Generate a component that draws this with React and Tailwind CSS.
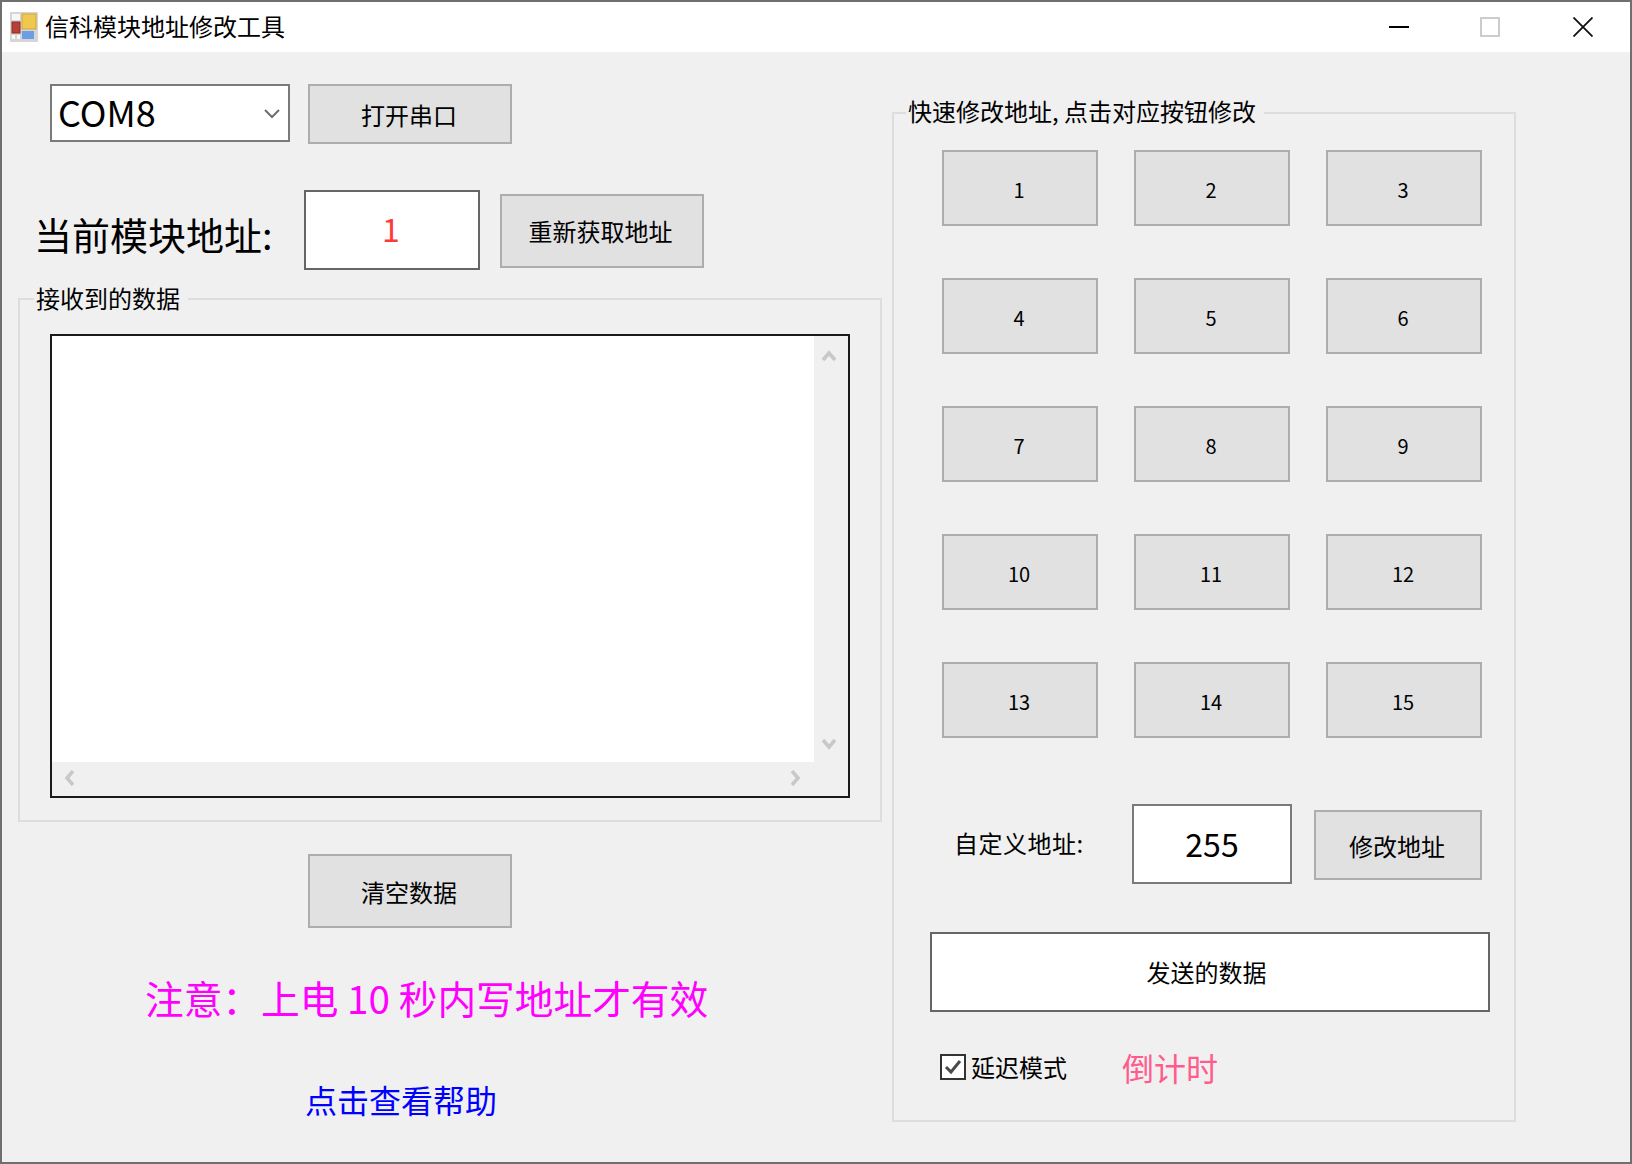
import React from 'react';

const font = "font-['Noto_Sans_CJK_SC','Liberation_Sans',sans-serif]";

const Btn = ({ className = '', children }) => (
    <button className={`flex items-center justify-center bg-[#e1e1e1] border-2 border-[#adadad] text-black ${className}`}>
        {children}
    </button>
);

const Chevron = ({ points, className = '' }) => (
    <svg width="16" height="16" viewBox="0 0 16 16" className={className}>
        <polyline points={points} fill="none" stroke="#c8c8c8" strokeWidth="3.5" />
    </svg>
);

const AppIcon = () => (
    <svg width="28" height="30" viewBox="0 0 28 30" className="ml-[8px] mr-[7px] shrink-0 -mt-[1px]">
        <rect width="28" height="30" fill="#d6d6d6" />
        <rect x="2" y="2" width="8" height="6" fill="#f8f8f8" />
        <rect x="12" y="2" width="14" height="15" fill="#f0c850" stroke="#cfa632" />
        <rect x="2" y="10" width="8" height="11" fill="#b8403a" stroke="#922620" />
        <rect x="12" y="19" width="12" height="8" fill="#6c9ee8" />
        <rect x="2" y="23" width="3" height="4" fill="#f8f8f8" />
        <rect x="7" y="23" width="3" height="4" fill="#f8f8f8" />
    </svg>
);

const TitleBar = () => (
    <div className="h-[50px] bg-white flex items-center shrink-0">
        <AppIcon />
        <span className="text-[24px] leading-[30px] text-black -mt-[3px]">信科模块地址修改工具</span>
        <div className="ml-auto flex items-center">
            <div className="w-[20px] h-[2px] bg-black mr-[71px]"></div>
            <div className="w-[20px] h-[20px] border-2 border-[#cccccc] mr-[73px]"></div>
            <svg width="20" height="20" viewBox="0 0 20 20" className="mr-[37px]">
                <path d="M0.5 0.5 L19.5 19.5 M19.5 0.5 L0.5 19.5" stroke="#111" strokeWidth="1.8" />
            </svg>
        </div>
    </div>
);

const Received = () => (
    <div className="relative ml-[16px] mt-[28px] w-[864px] h-[524px] border-2 border-[#dddddd] pl-[30px] pt-[34px]">
        <span className="absolute left-[14px] top-[-14px] bg-[#f0f0f0] pl-[2px] pr-[8px] text-[24px] leading-[24px] text-black">接收到的数据</span>
        <div className="w-[800px] h-[464px] border-2 border-[#1a1a1a] flex flex-col">
            <div className="flex flex-1">
                <div className="flex-1 bg-white"></div>
                <div className="w-[34px] flex flex-col items-center justify-between pt-[13px] pb-[11px] pr-[4px]">
                    <Chevron points="2,11 8,4 14,11" />
                    <Chevron points="2,5 8,12 14,5" />
                </div>
            </div>
            <div className="h-[34px] flex items-center pl-[10px] pr-[45px] justify-between pb-[3px]">
                <Chevron points="11,1 5,8 11,15" />
                <Chevron points="5,1 11,8 5,15" />
            </div>
        </div>
    </div>
);

const LeftColumn = () => (
    <div className="w-[890px] shrink-0">
        <div className="flex items-start mt-[32px] ml-[48px]">
            <div className="w-[240px] h-[58px] bg-white border-2 border-[#7a7a7a] flex items-center pl-[6px] pr-[7px]">
                <span className="text-[36px] leading-[40px] text-black -mt-[5px]">COM8</span>
                <svg width="18" height="12" viewBox="0 0 18 12" className="ml-auto">
                    <polyline points="2,3 9,10 16,3" fill="none" stroke="#707070" strokeWidth="2" />
                </svg>
            </div>
            <Btn className="w-[204px] h-[60px] ml-[18px] text-[24px] pt-[2px] pr-[2px]">打开串口</Btn>
        </div>
        <div className="flex items-start mt-[46px] ml-[32px]">
            <span className="w-[270px] mt-[22px] text-[38px] leading-[44px] text-black whitespace-nowrap">当前模块地址:</span>
            <div className="w-[176px] h-[80px] bg-white border-2 border-[#666666] flex items-center justify-center text-[32px] text-[#ff3a3a] pb-[5px] pr-[2px]">1</div>
            <Btn className="w-[204px] h-[74px] ml-[20px] mt-[4px] text-[24px] pr-[3px]">重新获取地址</Btn>
        </div>
        <Received />
        <Btn className="w-[204px] h-[74px] ml-[306px] mt-[32px] text-[24px] pt-[2px] pr-[2px]">清空数据</Btn>
        <div className="ml-[143px] mt-[44px] text-[38.7px] leading-[50px] text-[#ff00ff] whitespace-pre">注意：上电 10 秒内写地址才有效</div>
        <div className="ml-[303px] mt-[57px] text-[32px] leading-[40px] text-[#0000ff]">点击查看帮助</div>
    </div>
);

const QuickPanel = () => (
    <div className="relative mt-[60px] w-[624px] h-[1010px] border-2 border-[#dddddd]">
        <span className="absolute left-[12px] top-[-16px] bg-[#f0f0f0] pl-[2px] pr-[8px] text-[24px] leading-[26px] text-black whitespace-pre">快速修改地址, 点击对应按钮修改</span>
        <div className="grid grid-cols-[repeat(3,156px)] gap-x-[36px] gap-y-[52px] ml-[48px] mt-[36px]">
            {Array.from({ length: 15 }, (_, i) => (
                <Btn key={i} className="h-[76px] text-[20px] pt-[3px] pr-[2px]">{i + 1}</Btn>
            ))}
        </div>
        <div className="flex items-start mt-[66px]">
            <span className="w-[238px] pl-[60px] mt-[24px] text-[24px] leading-[30px] tracking-[0.5px] text-black whitespace-nowrap">自定义地址:</span>
            <div className="w-[160px] h-[80px] bg-white border-2 border-[#7a7a7a] flex items-center justify-center text-[32px] text-black pb-[2px]">255</div>
            <Btn className="w-[168px] h-[70px] ml-[22px] mt-[6px] text-[24px] pt-[2px] pr-[2px]">修改地址</Btn>
        </div>
        <div className="ml-[36px] mt-[48px] w-[560px] h-[80px] bg-white border-2 border-[#666666] flex items-center justify-center text-[24px] text-black pr-[7px]">发送的数据</div>
        <div className="flex items-center ml-[46px] mt-[35px]">
            <div className="w-[26px] h-[26px] border-2 border-[#333333] bg-white flex items-center justify-center">
                <svg width="18" height="16" viewBox="0 0 18 16">
                    <polyline points="2,8 7,13 16,2" fill="none" stroke="#4a4a4a" strokeWidth="3" />
                </svg>
            </div>
            <span className="ml-[5px] text-[24px] leading-[30px] text-black">延迟模式</span>
            <span className="ml-[55px] text-[32px] leading-[40px] text-[#ff5c8d]">倒计时</span>
        </div>
    </div>
);

export default function App() {
    return (
        <div className={`w-[1632px] h-[1164px] bg-[#f0f0f0] border-2 border-[#6f6f6f] flex flex-col overflow-hidden ${font}`}>
            <TitleBar />
            <div className="flex flex-1">
                <LeftColumn />
                <QuickPanel />
            </div>
        </div>
    );
}
